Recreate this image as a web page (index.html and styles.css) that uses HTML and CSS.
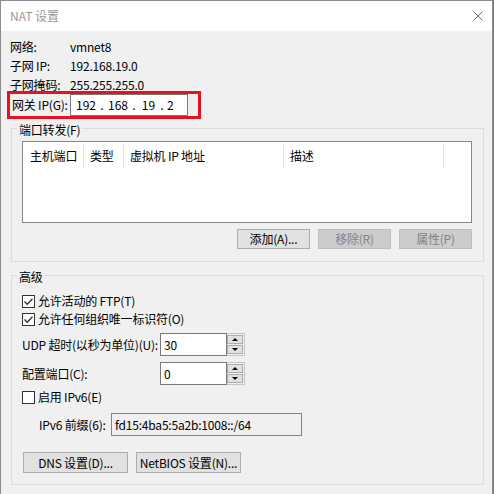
FILE: index.html
```html
<!DOCTYPE html>
<html lang="zh-CN">
<head>
<meta charset="utf-8">
<title>NAT 设置</title>
<link rel="stylesheet" href="styles.css">
</head>
<body>
<div class="window">
  <div class="titlebar">
    <span class="title">NAT 设置</span>
    <svg class="close" width="10" height="10" viewBox="0 0 10 10"><path d="M0.5 0.5 L9.5 9.5 M9.5 0.5 L0.5 9.5" stroke="#707070" stroke-width="1" fill="none"/></svg>
  </div>
  <div class="body">
    <div class="info">
      <span>网络:</span><span>vmnet8</span>
      <span>子网 IP:</span><span>192.168.19.0</span>
      <span>子网掩码:</span><span>255.255.255.0</span>
    </div>
    <div class="gateway">
      <span class="gw-label">网关 IP(G):</span>
      <div class="ipbox">
        <span class="oct o1">192</span><span class="dot d1">.</span><span class="oct o2">168</span><span class="dot d2">.</span><span class="oct o3">19</span><span class="dot d3">.</span><span class="oct o4">2</span>
      </div>
    </div>

    <fieldset class="group pf">
      <legend>端口转发(F)</legend>
      <div class="listview">
        <div class="lv-head">
          <div class="col c1">主机端口</div>
          <div class="col c2">类型</div>
          <div class="col c3">虚拟机 IP 地址</div>
          <div class="col c4">描述</div>
        </div>
      </div>
      <div class="btnrow end">
        <button class="btn">添加(A)...</button>
        <button class="btn" disabled>移除(R)</button>
        <button class="btn" disabled>属性(P)</button>
      </div>
    </fieldset>

    <fieldset class="group adv">
      <legend>高级</legend>
      <div class="check-row first">
        <span class="cb"><svg width="11" height="11" viewBox="0 0 11 11"><path d="M1.5 5.5 L4.2 8.2 L9.5 2.8" stroke="#333" stroke-width="1.4" fill="none"/></svg></span>
        <span>允许活动的 FTP(T)</span>
      </div>
      <div class="check-row">
        <span class="cb"><svg width="11" height="11" viewBox="0 0 11 11"><path d="M1.5 5.5 L4.2 8.2 L9.5 2.8" stroke="#333" stroke-width="1.4" fill="none"/></svg></span>
        <span>允许任何组织唯一标识符(O)</span>
      </div>
      <div class="field-row udp">
        <span class="field-label">UDP 超时(以秒为单位)(U):</span>
        <div class="spin">
          <div class="spin-input">30</div>
          <div class="spin-btns"><span class="spin-btn up"></span><span class="spin-btn down"></span></div>
        </div>
      </div>
      <div class="field-row port">
        <span class="field-label">配置端口(C):</span>
        <div class="spin">
          <div class="spin-input">0</div>
          <div class="spin-btns"><span class="spin-btn up"></span><span class="spin-btn down"></span></div>
        </div>
      </div>
      <div class="check-row ipv6">
        <span class="cb"></span>
        <span>启用 IPv6(E)</span>
      </div>
      <div class="field-row prefix">
        <span class="field-label indent">IPv6 前缀(6):</span>
        <div class="text-disabled">fd15:4ba5:5a2b:1008::/64</div>
      </div>
      <div class="btnrow start">
        <button class="btn wide">DNS 设置(D)...</button>
        <button class="btn wide">NetBIOS 设置(N)...</button>
      </div>
    </fieldset>
  </div>
</div>
</body>
</html>
```

FILE: styles.css
```css
* { box-sizing: border-box; }

html, body {
  margin: 0;
  background: #7a7a7a;
}

body {
  font-family: "Noto Sans CJK SC", "Noto Sans", sans-serif;
  font-size: 12px;
  letter-spacing: -0.2px;
  color: #000;
}

.window {
  width: 493px;
  height: 494px;
  border: 1px solid #8c8c8c;
  border-bottom: none;
  background: #f0f0f0;
  display: flex;
  flex-direction: column;
  overflow: hidden;
}

.titlebar {
  height: 30px;
  flex-shrink: 0;
  background: #fff;
  display: flex;
  align-items: center;
  justify-content: space-between;
  padding: 0 9px;
}

.title {
  color: #999;
  line-height: 16px;
  letter-spacing: 0;
}

.close { display: block; }

.body {
  padding: 6px 9px 0 9px;
}

.info {
  display: grid;
  grid-template-columns: 60px auto;
  line-height: 19px;
}

.gateway {
  display: flex;
  align-items: center;
  width: 194px;
  height: 28px;
  border: 3px solid #e81123;
  margin: -3px 0 0 -3px;
}

.gw-label {
  width: 60px;
  padding-left: 2px;
  line-height: 16px;
  white-space: nowrap;
}

.ipbox {
  width: 118px;
  height: 22px;
  border: 1px solid #7a7a7a;
  background: #fff;
  display: flex;
  align-items: center;
  padding-left: 3px;
  line-height: 18px;
  letter-spacing: 0;
}

.oct { display: inline-block; text-align: center; }
.o1, .o2 { width: 24px; }
.o3 { width: 21px; }
.o4 { margin-left: 2px; }
.dot { display: inline-block; width: 8px; text-align: center; }
.d3 { width: 6px; }

.group {
  width: 473px;
  margin: -1px 0 0 1px;
  border: 1px solid #dcdcdc;
  padding: 3px 11px 12px 10px;
  min-width: 0;
}

.group legend {
  padding: 4px 2px 0;
  margin-left: -5px;
  line-height: 16px;
}

.adv {
  margin-top: 3px;
  padding-bottom: 11px;
}

.listview {
  height: 82px;
  border: 1px solid #828790;
  background: #fff;
}

.lv-head {
  display: flex;
  padding-top: 1px;
}

.col {
  height: 25px;
  line-height: 25px;
  border-right: 1px solid #e5e5e5;
  padding-left: 6px;
  white-space: nowrap;
}
.c1 { width: 61px; padding-left: 7px; }
.c2 { width: 40px; }
.c3 { width: 160px; }
.c4 { width: 160px; }

.btnrow {
  display: flex;
  gap: 8px;
}
.btnrow.end {
  justify-content: flex-end;
  margin-top: 6px;
}
.btnrow.start {
  margin: 16px 0 0 1px;
}

.btn {
  width: 73px;
  height: 20px;
  padding: 0;
  border: 1px solid #adadad;
  background: #e1e1e1;
  font: inherit;
  letter-spacing: inherit;
  line-height: 18px;
  color: #000;
  white-space: nowrap;
}
.btn:disabled {
  background: #cccccc;
  border-color: #bfbfbf;
  color: #838383;
}
.btn.wide {
  width: 105px;
  height: 21px;
}

.check-row {
  display: flex;
  align-items: center;
  gap: 3px;
  height: 18px;
  line-height: 16px;
}
.check-row.first { margin-top: 4px; }
.check-row.ipv6 { margin-top: 3px; }

.cb {
  width: 13px;
  height: 13px;
  border: 1px solid #333;
  background: #fff;
  display: flex;
  align-items: center;
  justify-content: center;
}
.cb svg { display: block; }

.field-row {
  display: flex;
  align-items: center;
  height: 23px;
  line-height: 16px;
}
.field-row.udp { margin-top: 5px; }
.field-row.port { margin-top: 6px; }
.field-row.prefix { margin-top: 7px; }

.field-label {
  width: 138px;
  white-space: nowrap;
}
.field-label.indent {
  width: 89px;
  padding-left: 17px;
}

.spin { display: flex; }

.spin-input {
  width: 67px;
  height: 23px;
  border: 1px solid #7a7a7a;
  background: #fff;
  padding: 2px 3px;
  line-height: 17px;
}

.spin-btns {
  width: 18px;
  height: 23px;
  border: 1px solid #c6c6c6;
  border-left: none;
  background: #f0f0f0;
  display: flex;
  flex-direction: column;
  gap: 1px;
  padding: 1px 1px 1px 0;
}

.spin-btn {
  flex: 1;
  border: 1px solid #adadad;
  background: #e1e1e1;
  display: flex;
  align-items: center;
  justify-content: center;
}
.spin-btn::before {
  content: "";
  width: 0;
  height: 0;
  border-left: 3px solid transparent;
  border-right: 3px solid transparent;
}
.spin-btn.up::before { border-bottom: 3px solid #000; }
.spin-btn.down::before { border-top: 3px solid #000; }

.text-disabled {
  width: 191px;
  height: 23px;
  border: 1px solid #838383;
  background: #f0f0f0;
  padding: 2px 3px;
  line-height: 17px;
  white-space: nowrap;
}
```
